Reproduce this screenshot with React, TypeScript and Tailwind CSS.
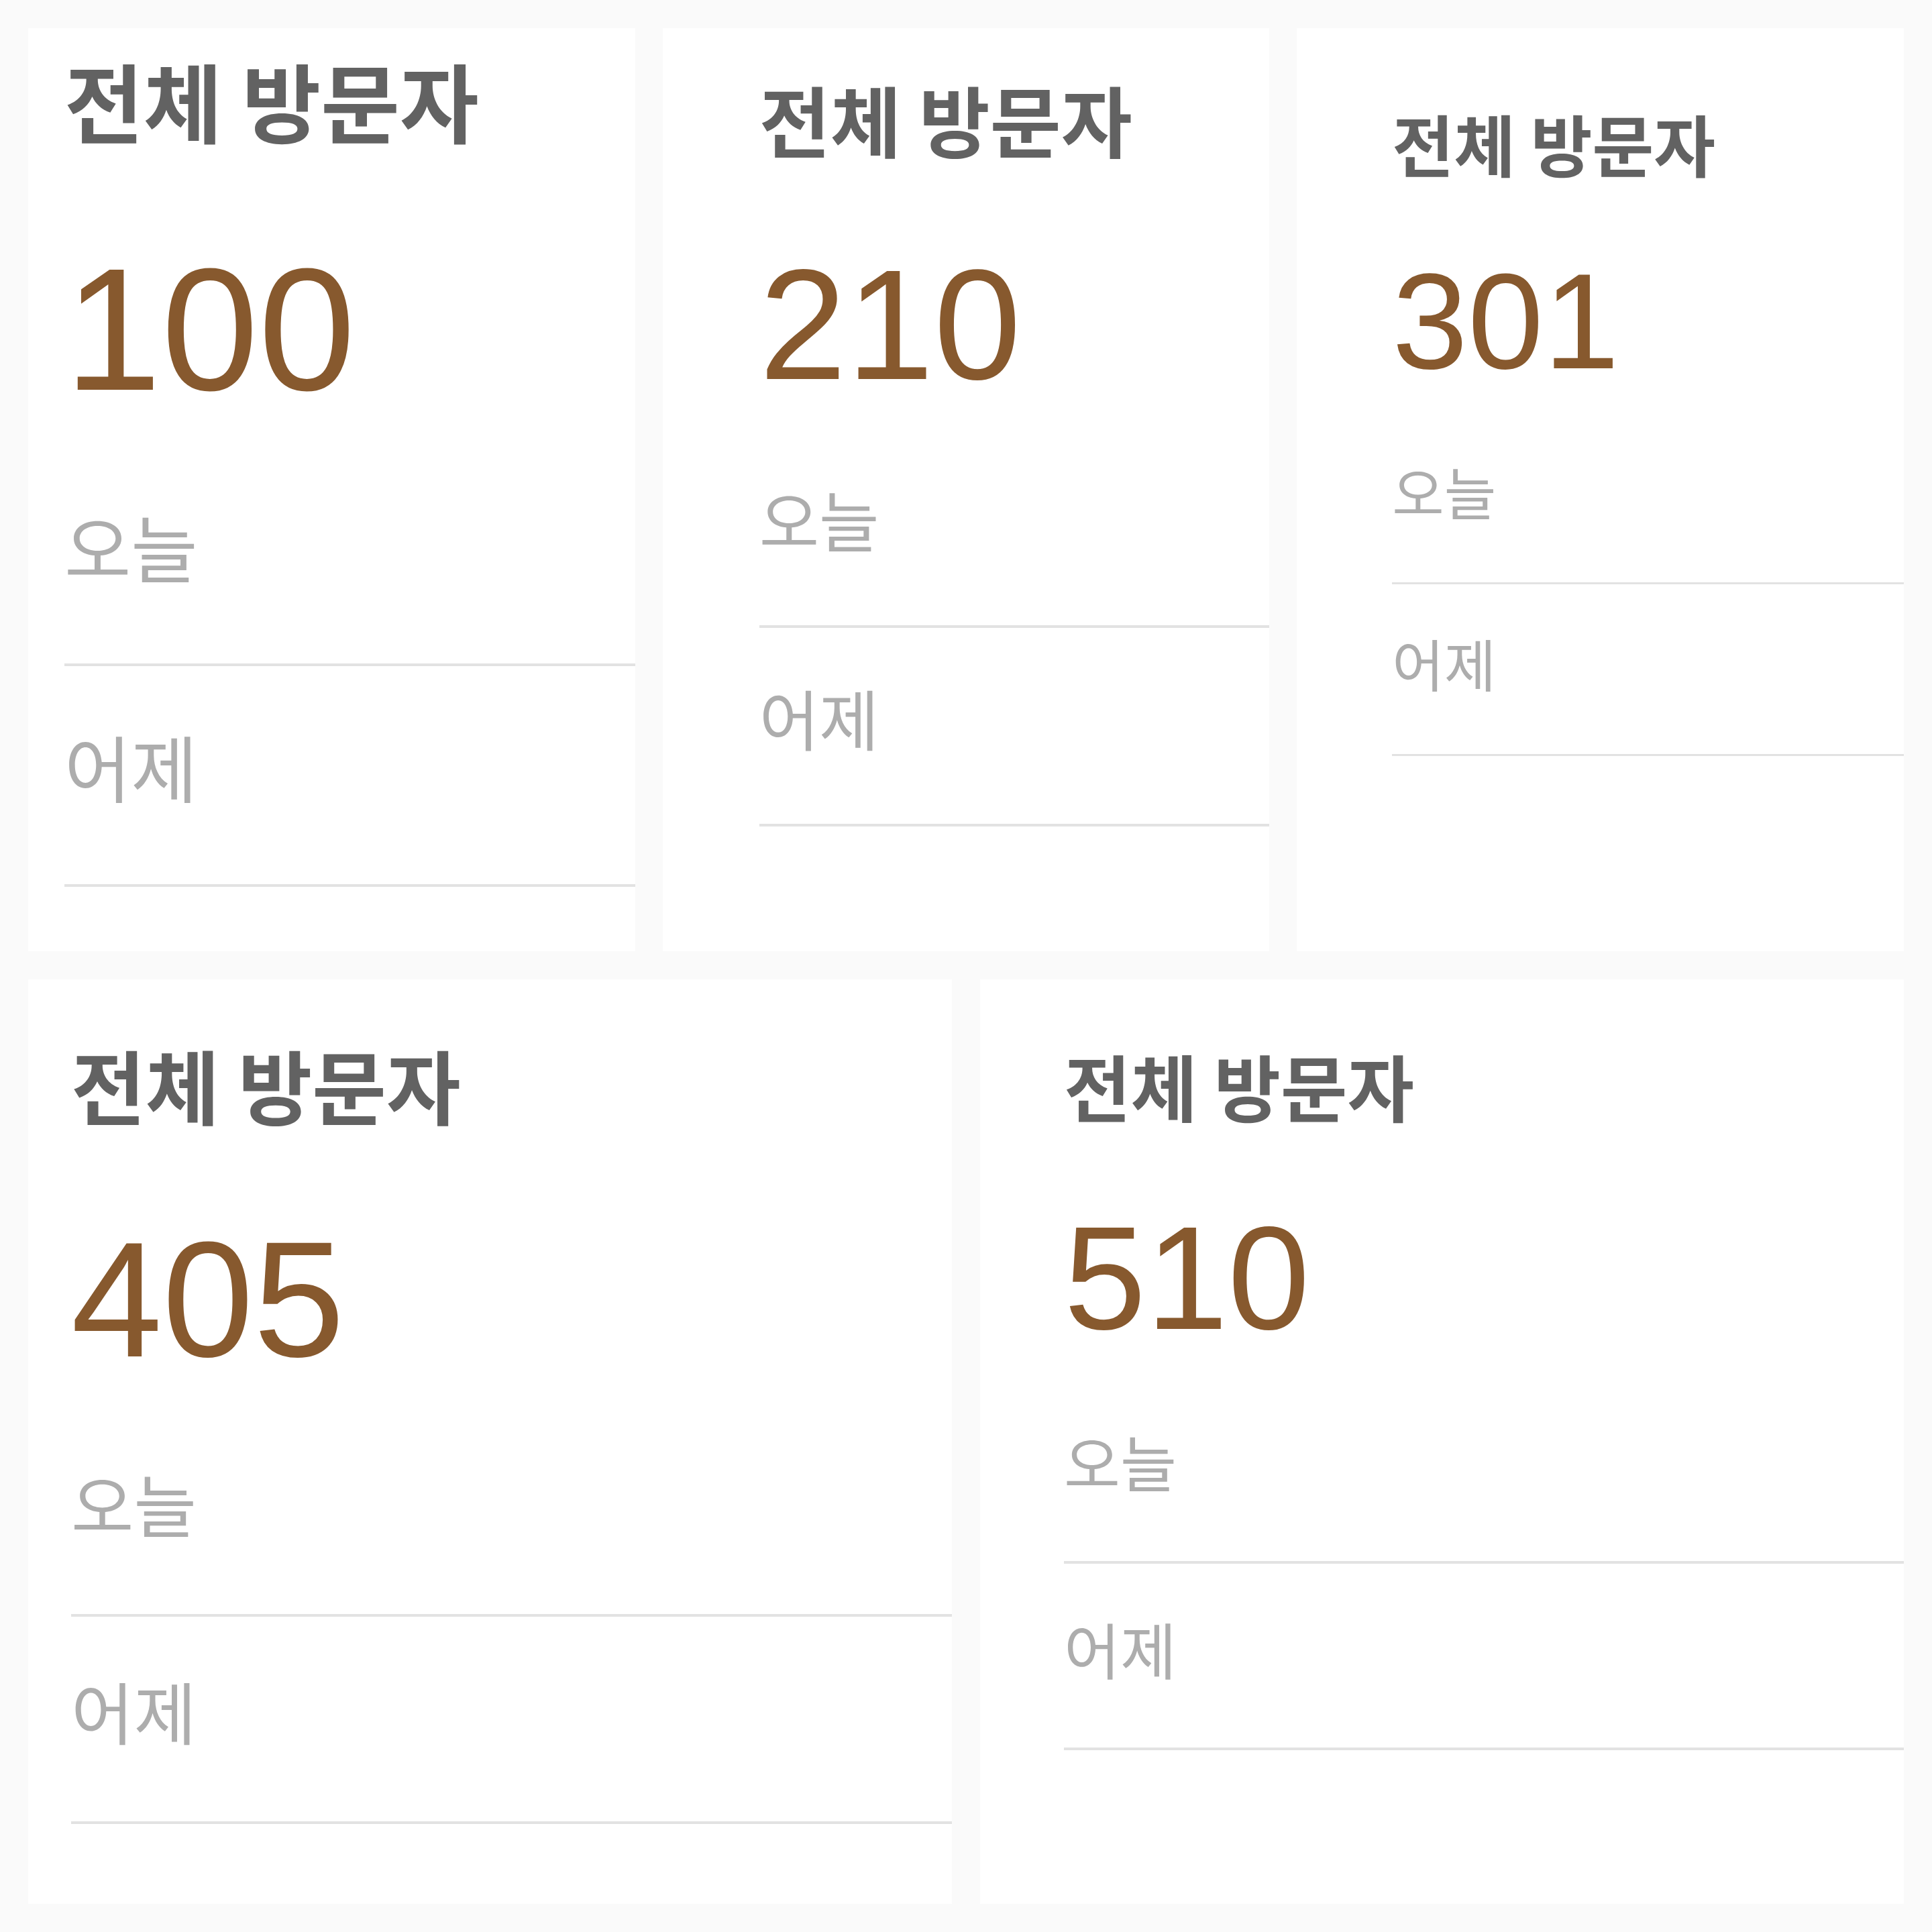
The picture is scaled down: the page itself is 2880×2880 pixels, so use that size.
// 방문자 통계 카드 모음

type VisitorCard = {
    total: string;
    // 카드마다 글자 크기(root)와 안쪽 여백이 다름
    frame: string;
};

const topRow: VisitorCard[] = [
    { total: '100', frame: 'text-[100px] pl-[54px] pt-[43px]' },
    { total: '210', frame: 'text-[90px] pl-[144px] pt-[76px]' },
    { total: '301', frame: 'text-[78px] pl-[142px] pt-[121px]' },
];

const bottomRow: VisitorCard[] = [
    { total: '405', frame: 'text-[94px] pl-[64px] pt-[96px]' },
    { total: '510', frame: 'text-[84.5px] pl-[125px] pt-[103px]' },
];

const rows = ['오늘', '어제'];

const StatCard = ({ total, frame }: VisitorCard) => {
    return (
        <div className={`bg-white overflow-hidden flex flex-col ${frame}`}>
            <h3 className="text-[1.28em] leading-none font-bold text-[#626262] whitespace-nowrap font-['Noto_Sans_CJK_KR',sans-serif]">
                전체 방문자
            </h3>
            <p className="mt-[0.57em] mb-[0.168em] text-[2.6em] leading-none text-[#87592e] font-['Liberation_Sans',Arial,sans-serif]">
                {total}
            </p>
            {rows.map(label => (
                <div
                    key={label}
                    className="text-[1.08em] leading-none pt-[0.87em] pb-[1.134em] border-b-[0.046em] border-[#e2e2e2] text-[#adadad] whitespace-nowrap font-['Noto_Sans_CJK_KR',sans-serif]"
                >
                    {label}
                </div>
            ))}
        </div>
    );
};

export default function App() {
    return (
        <div className="min-h-screen bg-[#fafafa] p-[42px] flex flex-col gap-[42px]">
            <div className="grid grid-cols-3 gap-x-[41px] h-[1376px]">
                {topRow.map(card => <StatCard key={card.total} {...card} />)}
            </div>
            <div className="grid grid-cols-2 gap-x-[42px] h-[1378px]">
                {bottomRow.map(card => <StatCard key={card.total} {...card} />)}
            </div>
        </div>
    );
}
